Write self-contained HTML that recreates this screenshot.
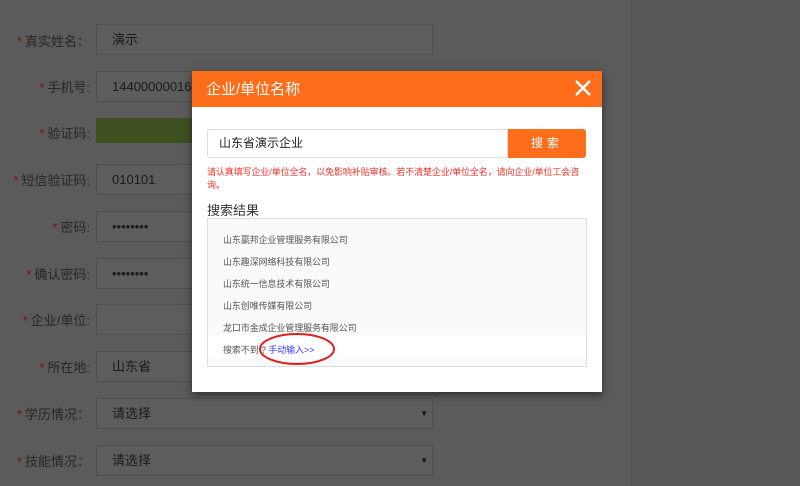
<!DOCTYPE html>
<html><head><meta charset="utf-8"><style>
body{margin:0;width:800px;height:486px;overflow:hidden;background:#5b5b5b;font-family:"Liberation Sans","Noto Sans CJK SC",sans-serif;position:relative}
.rt{position:absolute;left:630px;top:0;width:170px;height:486px;background:#575757}
.lbl{position:absolute;right:710px;font-size:13px;color:#262626;white-space:nowrap;text-align:right}
.lbl b{color:#7a1010;font-weight:normal;margin-right:3px}
.in{position:absolute;left:96px;width:337px;height:31px;border:1px solid #4e4e4e;background:#5d5d5d;box-sizing:border-box;font-size:13px;color:#1a1a1a;padding-left:15px;line-height:30px}
.arr{position:absolute;right:4px;top:0;font-size:8px;color:#111}
.modal{position:absolute;left:192px;top:71px;width:410px;height:321px;background:#fff;box-shadow:0 3px 8px rgba(0,0,0,.5)}
.hd{height:36px;background:#fd6d1a;color:#fff;font-size:15px;line-height:38px;padding-left:14px;position:relative}
.x{position:absolute;right:10px;top:8px;width:18px;height:18px}
.sin{position:absolute;left:15px;top:58px;width:301px;height:29px;border:1px solid #ddd;box-sizing:border-box;border-radius:3px 0 0 3px;font-size:12px;line-height:27px;padding-left:11px;color:#222}
.btn{position:absolute;left:316px;top:58px;width:78px;height:29px;background:#fd6d1a;border-radius:0 3px 3px 0;color:#fff;font-size:12px;text-align:center;line-height:29px;letter-spacing:4px}
.warn{position:absolute;left:15px;top:95px;width:380px;font-size:9px;line-height:13px;color:#f0302a;letter-spacing:-0.1px}
.rs{position:absolute;left:15px;top:129px;font-size:13px;color:#333}
.box{position:absolute;left:15px;top:147px;width:380px;height:149px;border:1px solid #ddd;box-sizing:border-box;background:#fafafa}
.it{position:absolute;left:15px;font-size:9px;color:#555;letter-spacing:-0.1px}
</style></head><body>
<div class="rt"></div>
<div class="lbl" style="top:31px"><b>*</b>真实姓名：</div><div class="in" style="top:24px">演示</div>
<div class="lbl" style="top:77px"><b>*</b>手机号:</div><div class="in" style="top:71px">14400000016</div>
<div class="lbl" style="top:123px"><b>*</b>验证码:</div><div class="in" style="top:118px;height:25px;background:#3f5020;border-color:#3f5020"></div>
<div class="lbl" style="top:170px"><b>*</b>短信验证码:</div><div class="in" style="top:164px">010101</div>
<div class="lbl" style="top:217px"><b>*</b>密码:</div><div class="in" style="top:211px">••••••••</div>
<div class="lbl" style="top:264px"><b>*</b>确认密码:</div><div class="in" style="top:258px">••••••••</div>
<div class="lbl" style="top:310px"><b>*</b>企业/单位:</div><div class="in" style="top:304px"></div>
<div class="lbl" style="top:357px"><b>*</b>所在地:</div><div class="in" style="top:351px">山东省</div>
<div class="lbl" style="top:404px"><b>*</b>学历情况：</div><div class="in" style="top:398px">请选择<span class="arr">▼</span></div>
<div class="lbl" style="top:451px"><b>*</b>技能情况：</div><div class="in" style="top:445px">请选择<span class="arr">▼</span></div>
<div class="modal">
<div class="hd">企业/单位名称<svg class="x" viewBox="0 0 18 18"><path d="M2 2L16 16M16 2L2 16" stroke="#fff" stroke-width="2.6"/></svg></div>
<div class="sin">山东省演示企业</div><div class="btn">搜索</div>
<div class="warn">请认真填写企业/单位全名，以免影响补贴审核。若不清楚企业/单位全名，请向企业/单位工会咨询。</div>
<div class="rs">搜索结果</div>
<div class="box">
<div class="it" style="top:14px">山东赢邦企业管理服务有限公司</div>
<div class="it" style="top:36px">山东趣深网络科技有限公司</div>
<div class="it" style="top:58px">山东统一信息技术有限公司</div>
<div class="it" style="top:80px">山东创唯传媒有限公司</div>
<div class="it" style="top:102px">龙口市金成企业管理服务有限公司</div>
<div style="position:absolute;left:0;top:116px;width:378px;height:24px;background:#fff"></div>
<div class="it" style="top:124px">搜索不到 ? <span style="color:#3a3aff">手动输入&gt;&gt;</span></div>
<svg style="position:absolute;left:49px;top:112px" width="80" height="36"><ellipse cx="40" cy="18" rx="37" ry="15" fill="none" stroke="#e02020" stroke-width="2"/></svg>
</div>
</div>
</body></html>
